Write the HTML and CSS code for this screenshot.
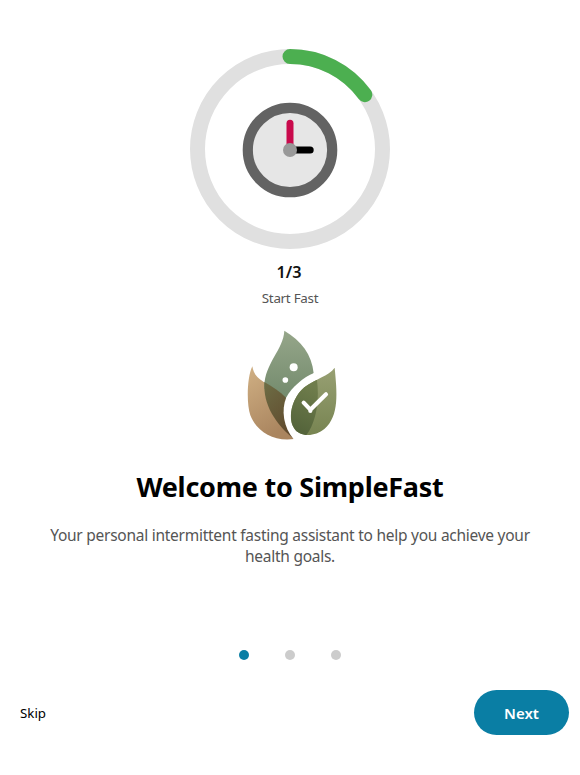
FILE: index.html
```html
<!DOCTYPE html>
<html lang="en">
<head>
<meta charset="utf-8">
<title>SimpleFast</title>
<link rel="stylesheet" href="styles.css">
</head>
<body>
<main class="screen">
  <svg class="ring" viewBox="0 0 200 200" aria-hidden="true">
    <circle cx="100" cy="100" r="92.5" fill="none" stroke="#e0e0e0" stroke-width="15"/>
    <path d="M100 7.5A92.5 92.5 0 0 1 174.83 45.63" fill="none" stroke="#4caf50" stroke-width="15" stroke-linecap="round"/>
    <circle cx="100" cy="101" r="42.2" fill="#e6e6e6" stroke="#636363" stroke-width="10.2"/>
    <path d="M100 101h20.2" stroke="#000" stroke-width="7" stroke-linecap="round"/>
    <path d="M100 101V74.2" stroke="#c90a4c" stroke-width="7" stroke-linecap="round"/>
    <circle cx="100" cy="101" r="7" fill="#999"/>
  </svg>
  <div class="step">1/3</div>
  <div class="stage">Start Fast</div>
  <svg class="logo" viewBox="0 0 345 375" aria-hidden="true">
    <defs>
      <linearGradient id="tan" x1="0" y1="0" x2="0.4" y2="1"><stop offset="0" stop-color="#d0b084"/><stop offset="1" stop-color="#aa855f"/></linearGradient>
      <linearGradient id="sage" x1="0" y1="0" x2="0" y2="1"><stop offset="0" stop-color="#96a68a"/><stop offset="1" stop-color="#728a6c"/></linearGradient>
      <linearGradient id="brown" x1="0" y1="0" x2="0.5" y2="1"><stop offset="0" stop-color="#6d6d45"/><stop offset="1" stop-color="#614b2e"/></linearGradient>
      <linearGradient id="olive" x1="0" y1="0" x2="0" y2="1"><stop offset="0" stop-color="#98a073"/><stop offset="1" stop-color="#778451"/></linearGradient>
      <linearGradient id="moss" x1="0.5" y1="0" x2="0.2" y2="1"><stop offset="0" stop-color="#6f7d4c"/><stop offset="1" stop-color="#506038"/></linearGradient>
      <clipPath id="right"><path d="M299 137C281 162 240 171 208 196C171 227 157 287 177 318C194 347 241 344 268 321C314 281 306 211 299 137Z"/></clipPath>
    </defs>
    <path d="M52 133C57 162 73 171 90 182L150 240L177 351C113 360 63 325 46 280C34 244 36 166 52 133Z" fill="url(#tan)"/>
    <path d="M148 26C145 83 89 124 88 193V200L154 235L236 154C231 97 199 57 148 26Z" fill="url(#sage)"/>
    <path d="M88 180C112 193 135 209 153 227L165 240L177 351C132 316 88 260 88 193Z" fill="url(#brown)"/>
    <path d="M237 153C206 165 170 196 154 226C138 264 145 317 177 353L210 340L250 160Z" fill="#fff"/>
    <path d="M299 137C281 162 240 171 208 196C171 227 157 287 177 318C194 347 241 344 268 321C314 281 306 211 299 137Z" fill="url(#olive)"/>
    <path clip-path="url(#right)" d="M246 174C254 239 243 302 212 342H150V174Z" fill="url(#moss)"/>
    <circle cx="176" cy="136" r="12" fill="#fff"/>
    <circle cx="151" cy="174" r="8.5" fill="#fff"/>
    <path d="M206 242L226 263L273 217M226 261V267" fill="none" stroke="#fff" stroke-width="12.5" stroke-linecap="round" stroke-linejoin="round"/>
  </svg>
  <h1 class="title">Welcome to SimpleFast</h1>
  <p class="intro">Your personal intermittent fasting assistant to help you achieve your health goals.</p>
  <div class="dots"><span class="dot dot-active"></span><span class="dot"></span><span class="dot"></span></div>
  <footer class="actions">
    <button class="skip">Skip</button>
    <button class="next">Next</button>
  </footer>
</main>
</body>
</html>
```
FILE: styles.css
```css
* { box-sizing: border-box; }
body { margin: 0; background: #fff; font-family: "Noto Sans", "Open Sans", sans-serif; }
.screen { height: 775px; padding-top: 49px; display: flex; flex-direction: column; align-items: center; overflow: hidden; }
.ring { width: 200px; height: 200px; flex: none; }
.step { height: 24px; margin-top: 11px; font-size: 16.2px; line-height: 24px; font-weight: 600; color: #111; position: relative; left: -1px; }
.stage { height: 20px; margin-top: 4px; font-size: 13.4px; line-height: 20px; letter-spacing: -0.28px; color: #555; }
.logo { width: 115px; height: 125px; margin: 14px 0 0 5px; flex: none; }
.title { height: 40px; margin: 20px 0 0; font-size: 27px; line-height: 40px; font-weight: 700; letter-spacing: -0.25px; white-space: nowrap; }
.intro { width: 500px; margin: 18px 0 0; font-size: 15.5px; line-height: 21px; letter-spacing: -0.26px; text-align: center; color: #555; }
.dots { display: flex; gap: 36px; margin-top: 83px; }
.dot { width: 10px; height: 10px; border-radius: 50%; background: #ccc; }
.dot-active { background: #0a7ea4; }
.actions { width: 100%; margin-top: 30px; padding: 0 11px 0 20px; display: flex; justify-content: space-between; align-items: center; }
button { border: 0; padding: 0; font-family: inherit; }
.skip { background: none; font-size: 13.3px; line-height: 20px; color: #000; }
.next { width: 95px; height: 45px; border-radius: 23px; background: #0a7ea4; color: #fff; font-size: 15px; font-weight: 600; }
```
